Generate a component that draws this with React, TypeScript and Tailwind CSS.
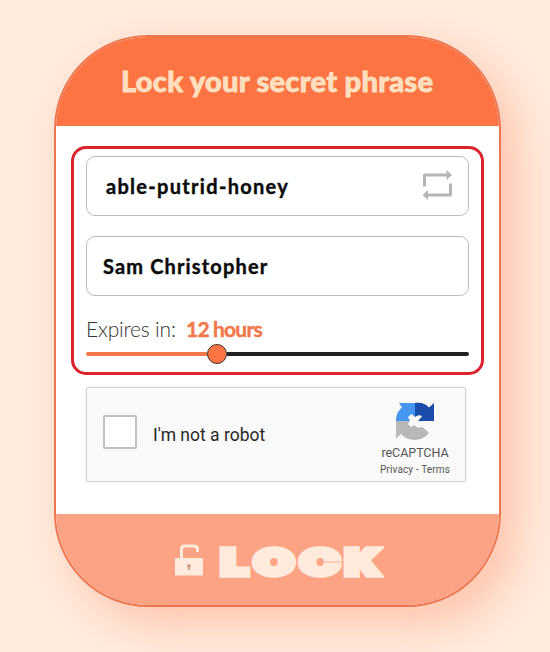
import React from "react";

const lato = "font-['Lato','Liberation_Sans',sans-serif]";

function RepeatIcon() {
  return (
    <svg width="32" height="32" viewBox="0 0 32 32" fill="none" stroke="#b5b5b5" strokeWidth="3" strokeLinejoin="round">
      <path d="M3.5 17.5V6H27M29.5 14.5V26H5" />
      <path d="M25.5 1L31 6L25.5 11ZM7 21L1.5 26L7 31Z" fill="#b5b5b5" stroke="none" />
    </svg>
  );
}

function CaptchaLogo() {
  return (
    <svg width="38" height="38" viewBox="0 0 38 38">
      <path d="M0 19C0 13 2 9 6 5.5L3 1H19V15L15.5 12L12 15L14 19Z" fill="#4695ee" />
      <path d="M19 1C25 0 30 2 33 5.5L38 1V19H22L26 14.5C24 12.5 22 13 19 15Z" fill="#1b4bab" />
      <path d="M0 19H14L12 22L15 25L18 23C21 26 24 26 26.5 25L33 31C26 40 12 40 5 32L0 36.5Z" fill="#b8b8b8" />
    </svg>
  );
}

function LockIcon() {
  return (
    <svg width="28" height="32" viewBox="0 0 28 32">
      <path d="M6.5 16V5Q6.5 2 9.5 2H19Q22.5 2 22.5 5V8" fill="none" stroke="#ffeadc" strokeWidth="3" />
      <rect x="0" y="14" width="28" height="17.5" rx=".7" fill="#ffeadc" />
      <path d="M12.2 20.5h3.4v2.7h-.8v2.7h-1.8v-2.7h-.8Z" fill="#c4957f" />
    </svg>
  );
}

export default function App() {
  return (
    <main className={`h-[652px] w-[550px] overflow-hidden bg-[#ffebde] pl-[54px] pt-[35px] ${lato}`}>
      <section className="flex h-[572px] w-[447px] flex-col overflow-hidden rounded-[94px] border-2 border-[#ed7650] bg-white shadow-[16px_17px_44px_rgba(255,115,66,0.32)]">
        <header className="flex h-[89px] shrink-0 items-center justify-center bg-[#fc7444]">
          <h1 className="w-[313px] origin-left scale-x-[1.06] whitespace-nowrap text-[27.5px] font-black leading-9 tracking-[0.2px] text-[#ffdfbd] [-webkit-text-stroke:0.8px_#ffdfbd]">
            Lock your secret phrase
          </h1>
        </header>

        <div className="h-[388px] shrink-0 pl-[15px] pt-5">
          <div className="h-[229px] w-[413px] rounded-[15px] border-[3px] border-[#dc222c] px-3 pt-[7px]">
            <div className="flex h-[60px] w-[383px] items-center justify-between rounded-[9px] border border-[#bcbcbc] pl-[19px] pr-[15px]">
              <span className="whitespace-nowrap text-[20px] font-bold tracking-[1.3px] text-[#0b0b0b] [-webkit-text-stroke:0.4px_#0b0b0b]">able-putrid-honey</span>
              <span className="-mt-0.5"><RepeatIcon /></span>
            </div>
            <div className="mt-5 flex h-[60px] w-[383px] items-center rounded-[9px] border border-[#bcbcbc] pl-4">
              <span className="whitespace-nowrap text-[20px] font-bold tracking-[1.15px] text-[#0b0b0b] [-webkit-text-stroke:0.4px_#0b0b0b]">Sam Christopher</span>
            </div>
            <div className="mt-[19px] flex h-[27px] items-center whitespace-nowrap text-[21px]">
              <span className="w-[100px] font-light tracking-[-0.2px] text-[#343434]">Expires in:</span>
              <span className="font-bold tracking-[-0.8px] text-[#f27749] [-webkit-text-stroke:0.4px_#f27749]">12 hours</span>
            </div>
            <div className="mt-0.5 flex h-5 w-[383px] items-center">
              <div className="h-1 w-[121px] rounded-l bg-[#f27749]" />
              <div className="h-5 w-5 rounded-full border-[1.5px] border-[#3e302c] bg-[#fc7444]" />
              <div className="h-1 flex-1 rounded-r bg-[#222]" />
            </div>
          </div>

          <div className="ml-[15px] mt-3 flex h-[95px] w-[380px] items-start rounded-[3px] border border-[#d3d3d3] bg-[#f9f9f9] pl-4 pt-3 shadow-[0_0_4px_rgba(0,0,0,0.08)] font-['Roboto','Liberation_Sans',sans-serif]">
            <div className="mt-[15px] h-[34px] w-[34px] rounded-[2px] border-2 border-[#c1c1c1] bg-white" />
            <span className="ml-4 mt-[23px] whitespace-nowrap text-[17.5px] leading-6 text-[#282828]">I'm not a robot</span>
            <div className="ml-auto mr-[14px] flex w-[72px] flex-col items-center whitespace-nowrap text-[#555]">
              <div className="mt-0.5"><CaptchaLogo /></div>
              <span className="mt-[5px] text-[12.5px] leading-4 tracking-[-0.05px]">reCAPTCHA</span>
              <span className="mt-0.5 text-[10px] leading-[13px] tracking-[0.15px]">Privacy - Terms</span>
            </div>
          </div>
        </div>

        <footer className="flex flex-1 items-start bg-[#fca385] pl-[119px] pt-[30px]">
          <LockIcon />
          <span className="ml-[18px] mt-0.5 flex h-8 whitespace-nowrap text-[36px] font-black leading-8 text-[#ffeadc] [-webkit-text-stroke:5.5px_#ffeadc] font-['Inter','Liberation_Sans',sans-serif]">
            <span className="w-[33px] origin-left scale-x-[1.33]">L</span>
            <span className="w-[46px] origin-left scale-x-[1.43]">O</span>
            <span className="w-[45px] origin-left scale-x-[1.46]">C</span>
            <span className="w-[42px] origin-left scale-x-[1.28]">K</span>
          </span>
        </footer>
      </section>
    </main>
  );
}
